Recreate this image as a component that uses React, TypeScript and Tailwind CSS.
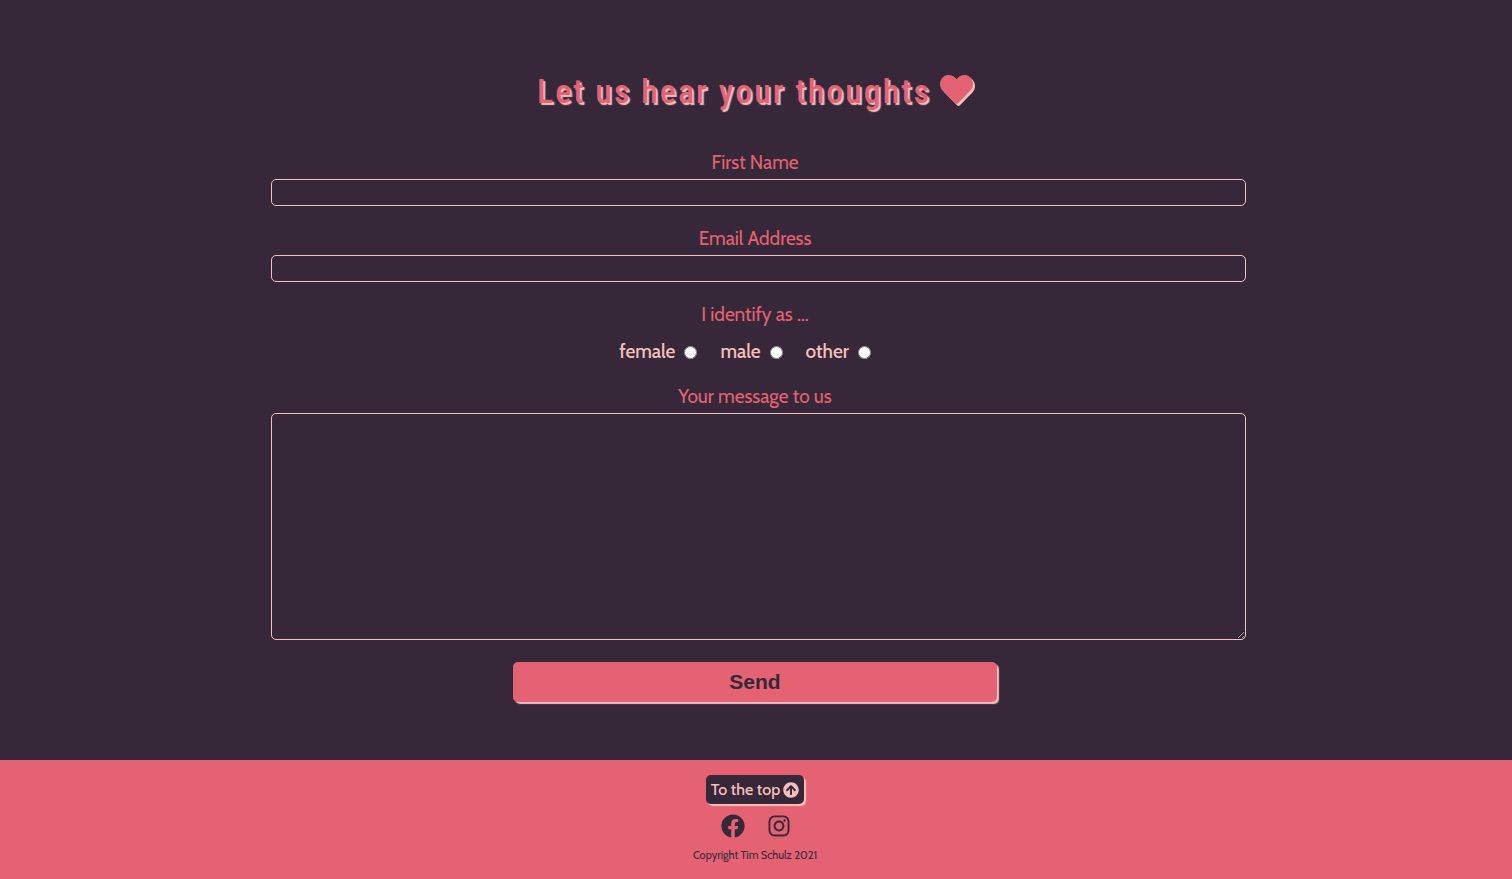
import { FaArrowCircleUp, FaFacebook, FaHeart, FaInstagram } from "react-icons/fa";

const identities = ["female", "male", "other"];
const fieldStyle =
  "block w-[calc(100%+7px)] rounded-[5px] border border-[#f6bfc2] bg-transparent px-2 text-[#f6bfc2] outline-none focus:ring-1 focus:ring-[#f6bfc2]";
const labelStyle = "mb-[3px] block text-center leading-[26px]";

export default function App() {
  return (
    <div className="flex min-h-screen flex-col bg-[#362838] font-['Cabin','Lato',sans-serif] text-[19px] text-[#e56273]">
      <main className="flex grow flex-col items-center pt-[70px] pr-[2px] pb-[58px]">
        <h1 className="mb-[38px] flex items-center gap-[9px] font-['Roboto_Condensed','Roboto',sans-serif] text-[34px] leading-[42px] font-medium tracking-[2px] [text-shadow:2px_2px_1px_#f6bfbc]">
          Let us hear your thoughts
          <FaHeart className="mb-1 size-[33px] drop-shadow-[2px_2px_0_#f6bfbc]" aria-hidden="true" />
        </h1>
        <form className="flex w-[64vw] flex-col" onSubmit={(event) => event.preventDefault()}>
          <div className="mb-5">
            <label htmlFor="name" className={labelStyle}>First Name</label>
            <input id="name" type="text" className={`${fieldStyle} h-[27px]`} />
          </div>
          <div className="mb-5">
            <label htmlFor="email" className={labelStyle}>Email Address</label>
            <input id="email" type="email" className={`${fieldStyle} h-[27px]`} />
          </div>
          <fieldset className="mb-5">
            <legend className="mb-3 w-full text-center leading-[26px]">I identify as ...</legend>
            <div className="flex h-6 items-center justify-center gap-[23px] pr-5 leading-[26px] font-medium text-[#f6bfbc]">
              {identities.map((identity) => (
                <label key={identity} className="flex items-center gap-[9px]">
                  {identity}
                  <input type="radio" name="identity" value={identity} className="size-[13px]" />
                </label>
              ))}
            </div>
          </fieldset>
          <div className="mb-[22px]">
            <label htmlFor="message" className={labelStyle}>Your message to us</label>
            <textarea id="message" className={`${fieldStyle} h-[227px] resize`} />
          </div>
          <button
            type="submit"
            className="h-10 w-1/2 self-center rounded-[5px] bg-[#e56273] font-['Liberation_Sans',sans-serif] text-[21px] font-bold text-[#362838] shadow-[2px_2px_1px_#f6bfbc]"
          >
            Send
          </button>
        </form>
      </main>
      <footer className="flex flex-col items-center bg-[#e56273] pt-[15px] pr-[2px] pb-4 text-[#362838]">
        <a
          href="#top"
          className="mb-[10px] flex h-[29px] items-center gap-[3px] rounded-[5px] bg-[#362838] px-[5px] text-base font-medium text-[#f6bfbc] shadow-[2px_2px_1px_#f6bfbc]"
        >
          To the top
          <FaArrowCircleUp aria-hidden="true" />
        </a>
        <div className="mb-[9px] flex gap-[22px] pl-[2px] text-2xl">
          <a href="#facebook" aria-label="Facebook"><FaFacebook /></a>
          <a href="#instagram" aria-label="Instagram"><FaInstagram /></a>
        </div>
        <p className="text-[11px] leading-4">Copyright Tim Schulz 2021</p>
      </footer>
    </div>
  );
}
